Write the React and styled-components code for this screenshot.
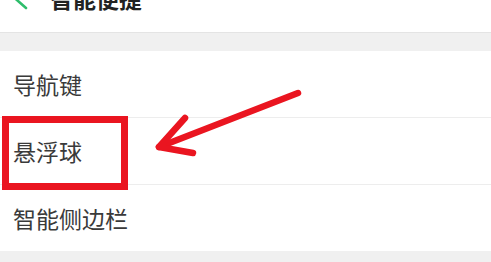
import React from "react";
import styled, { createGlobalStyle } from "styled-components";

const GlobalStyle = createGlobalStyle`
	html, body {
		margin: 0;
		padding: 0;
		background: #f0f0f0;
		overflow: hidden;
	}
	body {
		font-family: "Noto Sans CJK SC", "Noto Sans", sans-serif;
	}
`;

const items = ["导航键", "悬浮球", "智能侧边栏"];

const App = () => (
	<>
		<GlobalStyle />
		<Page>
			<Header>
				<Back viewBox="0 0 16 24" aria-hidden="true">
					<path d="M14 -15 L1.5 -2 L14 9" />
				</Back>
				<Title>智能便捷</Title>
			</Header>
			<Gap />
			<List>
				{items.map((label) => (
					<Row key={label}>{label}</Row>
				))}
			</List>
			<Highlight />
			<Arrow viewBox="0 0 491 262" aria-hidden="true">
				<path d="M298 93 L159 147" />
				<path d="M185 118 L159 147 L193 153" />
			</Arrow>
		</Page>
	</>
);

const Page = styled.div`
	position: relative;
	width: 491px;
	height: 262px;
	background: #f0f0f0;
	overflow: hidden;
`;

const Header = styled.header`
	height: 33px;
	display: flex;
	align-items: flex-end;
	gap: 22px;
	padding: 0 0 22px 12px;
	box-sizing: border-box;
	background: #fff;
	border-bottom: 1px solid #e4e4e4;
`;

const Back = styled.svg`
	width: 16px;
	height: 24px;
	flex-shrink: 0;
	margin-bottom: -13px;
	overflow: visible;
	fill: none;
	stroke: #2ebd6b;
	stroke-width: 2.6;
	stroke-linecap: round;
	stroke-linejoin: round;
`;

const Title = styled.h1`
	margin: 0;
	font-size: 23px;
	line-height: 23px;
	font-weight: 600;
	color: #222;
`;

const Gap = styled.div`
	height: 18px;
`;

const List = styled.ul`
	list-style: none;
	margin: 0;
	padding: 0;
	background: #fff;
`;

const Row = styled.li`
	height: 66px;
	display: flex;
	align-items: center;
	padding-left: 13px;
	font-size: 23px;
	color: #3a3a3a;
	border-bottom: 1px solid #ededed;

	&:last-child {
		border-bottom: none;
	}
`;

const Highlight = styled.div`
	position: absolute;
	left: 2px;
	top: 116px;
	width: 126px;
	height: 74px;
	box-sizing: border-box;
	border: 7px solid #ea1520;
`;

const Arrow = styled.svg`
	position: absolute;
	left: 0;
	top: 0;
	width: 491px;
	height: 262px;
	fill: none;
	stroke: #ea1520;
	stroke-width: 6.5;
	stroke-linecap: round;
	stroke-linejoin: round;
`;

export default App;
